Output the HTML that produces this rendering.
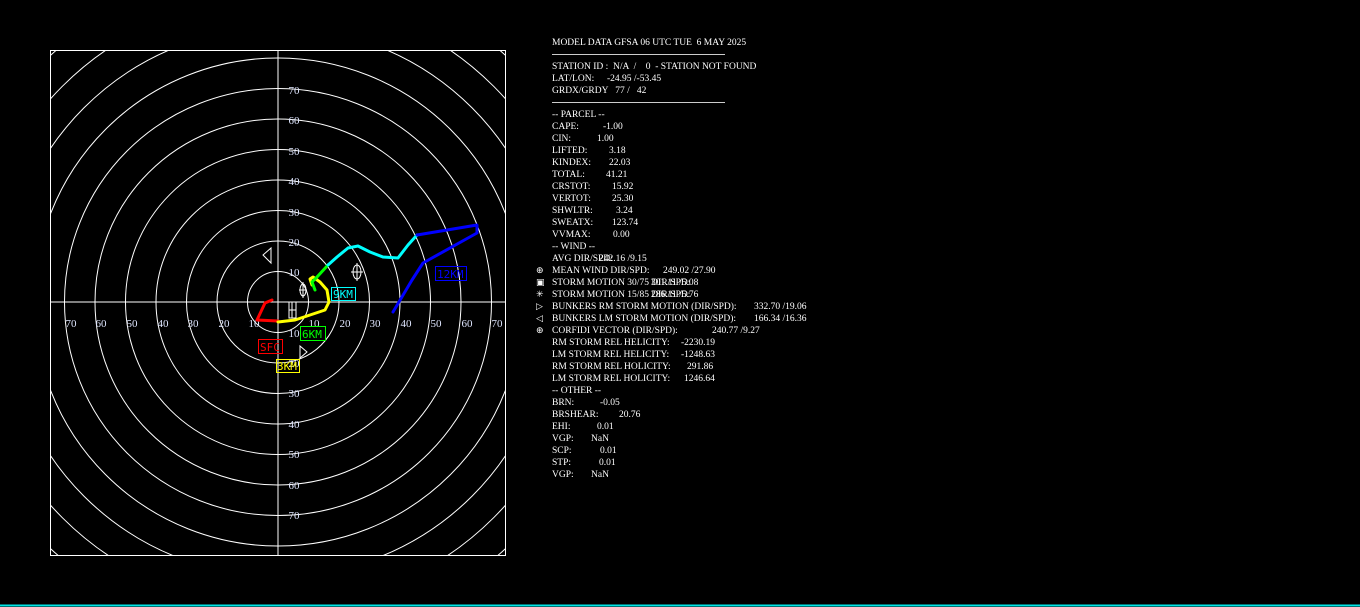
<!DOCTYPE html>
<html><head><meta charset="utf-8"><style>
html,body{margin:0;padding:0;background:#000;width:1360px;height:607px;overflow:hidden;position:relative}
svg{display:block}
.t{position:absolute;font-family:"Liberation Serif",serif;font-size:9.5px;color:#fff;white-space:pre;line-height:12px}
.ic{position:absolute;left:536px;font-family:"DejaVu Sans",sans-serif;font-size:9px;color:#fff;line-height:12px}
</style></head><body>
<svg width="1360" height="607" style="position:absolute;left:0;top:0" xmlns="http://www.w3.org/2000/svg">
<defs><clipPath id="c"><rect x="50" y="50" width="456" height="506"/></clipPath></defs>
<g clip-path="url(#c)" fill="none" stroke="#fff" stroke-width="1">
<circle cx="278" cy="302" r="30.5"/><circle cx="278" cy="302" r="61"/><circle cx="278" cy="302" r="91.5"/>
<circle cx="278" cy="302" r="122"/><circle cx="278" cy="302" r="152.5"/><circle cx="278" cy="302" r="183"/>
<circle cx="278" cy="302" r="213.5"/><circle cx="278" cy="302" r="244"/><circle cx="278" cy="302" r="274.5"/>
<circle cx="278" cy="302" r="305"/><circle cx="278" cy="302" r="335.5"/>
<line x1="50" y1="302" x2="506" y2="302"/><line x1="278" y1="50" x2="278" y2="556"/>
</g>
<rect x="50.5" y="50.5" width="455" height="505" fill="none" stroke="#fff"/>
<g font-family="Liberation Serif,serif" font-size="11" fill="#dfe6ff" text-anchor="middle">
<text x="71" y="327">70</text><text x="101" y="327">60</text><text x="132" y="327">50</text><text x="163" y="327">40</text><text x="193" y="327">30</text><text x="224" y="327">20</text><text x="254" y="327">10</text>
<text x="314" y="327">10</text><text x="345" y="327">20</text><text x="375" y="327">30</text><text x="406" y="327">40</text><text x="436" y="327">50</text><text x="467" y="327">60</text><text x="497" y="327">70</text>
<text x="294" y="94">70</text><text x="294" y="124">60</text><text x="294" y="155">50</text><text x="294" y="185">40</text><text x="294" y="216">30</text><text x="294" y="246">20</text><text x="294" y="276">10</text>
<text x="294" y="337">10</text><text x="294" y="367">20</text><text x="294" y="397">30</text><text x="294" y="428">40</text><text x="294" y="458">50</text><text x="294" y="489">60</text><text x="294" y="519">70</text>
</g>
<g fill="none" stroke-width="3" stroke-linejoin="round" stroke-linecap="round">
<polyline stroke="#ff0000" points="272,300 265,303 257,320 278,321"/>
<polyline stroke="#ffff00" points="278,322 295,320 310,315 325,310 329,302 327,290 320,282 313,277 310,279 312,285"/>
<polyline stroke="#00ff00" points="315,290 312,282 317,277 328,265"/>
<polyline stroke="#00ffff" points="328,265 337,257 348,248 358,246 370,252 383,257 398,258 408,245 417,235"/>
<polyline stroke="#0000ff" points="417,235 477,225 477,233 423,263 412,280 393,312"/>
</g>
<g font-family="DejaVu Sans Mono,monospace" font-size="11" fill="none" stroke-width="1">
<rect x="258.5" y="339.5" width="24" height="14" stroke="#f00"/><text x="260" y="351" fill="#f00" stroke="none">SFC</text>
<rect x="276.5" y="359.5" width="23" height="13" stroke="#ff0"/><text x="277" y="370" fill="#ff0" stroke="none">3KM</text>
<rect x="300.5" y="326.5" width="25" height="14" stroke="#0f0"/><text x="302" y="338" fill="#0f0" stroke="none">6KM</text>
<rect x="331.5" y="287.5" width="24" height="13" stroke="#0ff"/><text x="333" y="298" fill="#0ff" stroke="none">9KM</text>
<rect x="435.5" y="266.5" width="31" height="14" stroke="#00f"/><text x="437" y="278" fill="#00f" stroke="none">12KM</text>
</g>
<g fill="none" stroke="#fff" stroke-width="1">
<polygon points="271,248 263,255 271,263"/>
<polygon points="300,346 307,352 300,358"/>
<ellipse cx="357" cy="272" rx="4" ry="7"/><line x1="357" y1="263" x2="357" y2="281"/><line x1="351" y1="272" x2="363" y2="272"/>
<ellipse cx="303" cy="290" rx="3" ry="6"/><line x1="303" y1="282" x2="303" y2="298"/><line x1="299" y1="290" x2="307" y2="290"/>
<rect x="289" y="302" width="7" height="16"/><line x1="289" y1="310" x2="296" y2="310"/><line x1="292" y1="302" x2="292" y2="318"/>
</g>
<line x1="552" y1="54.5" x2="725" y2="54.5" stroke="#ccc"/>
<line x1="552" y1="102.5" x2="725" y2="102.5" stroke="#ccc"/>
<line x1="0" y1="605.5" x2="1360" y2="605.5" stroke="#00e5e5" stroke-width="2"/>
</svg>
<div class="t" style="left:552px;top:37px">MODEL DATA GFSA 06 UTC TUE  6 MAY 2025</div>
<div class="t" style="left:552px;top:61px">STATION ID :  N/A  /    0  - STATION NOT FOUND</div>
<div class="t" style="left:552px;top:73px">LAT/LON:</div><div class="t" style="left:607px;top:73px">-24.95 /-53.45</div>
<div class="t" style="left:552px;top:85px">GRDX/GRDY   77 /   42</div>
<div class="t" style="left:552px;top:109px">-- PARCEL --</div>
<div class="t" style="left:552px;top:121px">CAPE:</div><div class="t" style="left:603px;top:121px">-1.00</div>
<div class="t" style="left:552px;top:133px">CIN:</div><div class="t" style="left:597px;top:133px">1.00</div>
<div class="t" style="left:552px;top:145px">LIFTED:</div><div class="t" style="left:609px;top:145px">3.18</div>
<div class="t" style="left:552px;top:157px">KINDEX:</div><div class="t" style="left:609px;top:157px">22.03</div>
<div class="t" style="left:552px;top:169px">TOTAL:</div><div class="t" style="left:606px;top:169px">41.21</div>
<div class="t" style="left:552px;top:181px">CRSTOT:</div><div class="t" style="left:612px;top:181px">15.92</div>
<div class="t" style="left:552px;top:193px">VERTOT:</div><div class="t" style="left:612px;top:193px">25.30</div>
<div class="t" style="left:552px;top:205px">SHWLTR:</div><div class="t" style="left:616px;top:205px">3.24</div>
<div class="t" style="left:552px;top:217px">SWEATX:</div><div class="t" style="left:612px;top:217px">123.74</div>
<div class="t" style="left:552px;top:229px">VVMAX:</div><div class="t" style="left:613px;top:229px">0.00</div>
<div class="t" style="left:552px;top:241px">-- WIND --</div>
<div class="t" style="left:552px;top:253px">AVG DIR/SPD:</div><div class="t" style="left:599px;top:253px">242.16 /9.15</div>
<div class="ic" style="top:265px">⊕</div><div class="t" style="left:552px;top:265px">MEAN WIND DIR/SPD:</div><div class="t" style="left:663px;top:265px">249.02 /27.90</div>
<div class="ic" style="top:277px">▣</div><div class="t" style="left:552px;top:277px">STORM MOTION 30/75 DIR/SPD:</div><div class="t" style="left:651px;top:277px">301.11 /5.08</div>
<div class="ic" style="top:289px">✳</div><div class="t" style="left:552px;top:289px">STORM MOTION 15/85 DIR/SPD:</div><div class="t" style="left:651px;top:289px">286.11 /5.76</div>
<div class="ic" style="top:301px">▷</div><div class="t" style="left:552px;top:301px">BUNKERS RM STORM MOTION (DIR/SPD):</div><div class="t" style="left:754px;top:301px">332.70 /19.06</div>
<div class="ic" style="top:313px">◁</div><div class="t" style="left:552px;top:313px">BUNKERS LM STORM MOTION (DIR/SPD):</div><div class="t" style="left:754px;top:313px">166.34 /16.36</div>
<div class="ic" style="top:325px">⊕</div><div class="t" style="left:552px;top:325px">CORFIDI VECTOR (DIR/SPD):</div><div class="t" style="left:712px;top:325px">240.77 /9.27</div>
<div class="t" style="left:552px;top:337px">RM STORM REL HELICITY:</div><div class="t" style="left:681px;top:337px">-2230.19</div>
<div class="t" style="left:552px;top:349px">LM STORM REL HELICITY:</div><div class="t" style="left:681px;top:349px">-1248.63</div>
<div class="t" style="left:552px;top:361px">RM STORM REL HOLICITY:</div><div class="t" style="left:687px;top:361px">291.86</div>
<div class="t" style="left:552px;top:373px">LM STORM REL HOLICITY:</div><div class="t" style="left:684px;top:373px">1246.64</div>
<div class="t" style="left:552px;top:385px">-- OTHER --</div>
<div class="t" style="left:552px;top:397px">BRN:</div><div class="t" style="left:600px;top:397px">-0.05</div>
<div class="t" style="left:552px;top:409px">BRSHEAR:</div><div class="t" style="left:619px;top:409px">20.76</div>
<div class="t" style="left:552px;top:421px">EHI:</div><div class="t" style="left:597px;top:421px">0.01</div>
<div class="t" style="left:552px;top:433px">VGP:</div><div class="t" style="left:591px;top:433px">NaN</div>
<div class="t" style="left:552px;top:445px">SCP:</div><div class="t" style="left:600px;top:445px">0.01</div>
<div class="t" style="left:552px;top:457px">STP:</div><div class="t" style="left:599px;top:457px">0.01</div>
<div class="t" style="left:552px;top:469px">VGP:</div><div class="t" style="left:591px;top:469px">NaN</div>
</body></html>
